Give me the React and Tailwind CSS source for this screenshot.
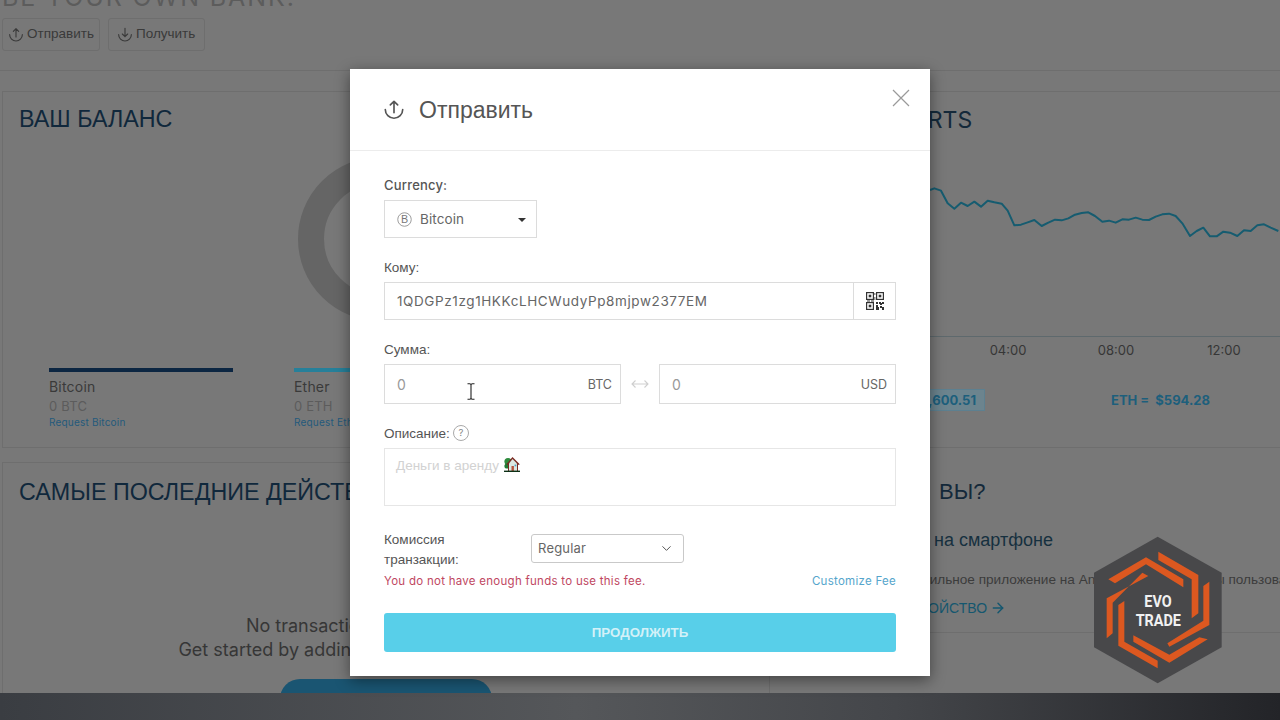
import React from "react";
import { ChevronDown, ArrowRight } from "lucide-react";

const chartPts = "15,300 28,295 48,302 68,340 88,356 108,338 128,348 148,335 168,350 188,332 208,337 230,341 248,362 268,406 288,404 308,397 328,390 350,408 370,398 390,389 410,391 430,385 450,374 470,369 490,367 510,378 532,395 552,392 572,398 592,388 612,389 632,383 652,389 672,390 692,380 712,373 732,371 752,378 772,400 795,438 815,423 835,413 855,439 875,439 895,425 915,428 937,438 957,421 977,423 997,406 1017,403 1037,413 1060,423";

function UploadIcon({ className, color = "#555", down = false, sw = 1.7 }) {
  return (
    <svg viewBox="0 0 24 24" fill="none" stroke={color} strokeWidth={sw} strokeLinecap="round" strokeLinejoin="round" className={className}>
      <path d="M2.5 11.5a9.5 9.5 0 0 0 19 0" />
      {down ? <path d="M12 2v12.5M8 10.5l4 4 4-4" /> : <path d="M12 15V2.5M8 6.5l4-4 4 4" />}
    </svg>
  );
}

function QrIcon() {
  const fp = (x, y) => (
    <g key={x + "-" + y}>
      <rect x={x + 0.6} y={y + 0.6} width="6.8" height="6.8" fill="none" stroke="#333" strokeWidth="1.2" />
      <rect x={x + 2.7} y={y + 2.7} width="2.6" height="2.6" fill="#333" />
    </g>
  );
  return (
    <svg viewBox="0 0 18 18" className="w-[18px] h-[18px]">
      {fp(0, 0)}
      {fp(10, 0)}
      {fp(0, 10)}
      <path d="M10 10h2v2h-2zM13 10h2v1h1v2h-2v-1h-1zM16 10h2v2h-2zM10 13h2v2h1v3h-3zM14 14h2v1h2v3h-2v-2h-2zM8.5 1h.8v2h-.8zM8.5 5h.8v3h-.8zM1 8.6h3v.8H1zM5 8.6h3v.8H5z" fill="#333" />
    </svg>
  );
}

function HouseEmoji() {
  return (
    <svg viewBox="0 0 16 16" className="w-4 h-4 inline-block -mt-[1px]">
      <circle cx="4" cy="5.5" r="3.6" fill="#2e8b3d" />
      <circle cx="3" cy="10" r="2.6" fill="#1f7a33" />
      <path d="M8.5 1 15.5 8v.8H14V15H4V8.8H2.5V8z" fill="#7a2a22" />
      <path d="M8.5 3 13 7.5V15H5V7.5z" fill="#dce9e2" />
      <rect x="7.5" y="10" width="2.4" height="5" fill="#b5533c" />
      <rect x="10.6" y="8.6" width="1.7" height="1.7" fill="#4aa0c8" />
      <path d="M0 14.6h16V16H0z" fill="#0c2f15" />
    </svg>
  );
}

function Logo() {
  return (
    <svg viewBox="0 0 600 480" className="absolute left-[1080px] top-[530px] w-[200px] h-[160px]">
      <polygon points="233,20 425,128 425,352 233,460 42,352 42,128" fill="#48484a" />
      <g fill="#dc5820">
        <polygon points="85,148 198,82 310,148 310,172 198,103 105,160" />
        <polygon points="235,65 355,135 355,250 335,265 335,148 235,90" />
        <polygon points="388,155 388,285 268,350 262,340 370,272 370,168" />
        <polygon points="383,328 268,398 160,335 160,316 268,374 358,322" />
        <polygon points="233,415 115,347 115,225 133,213 133,335 233,392" />
        <polygon points="205,138 80,205 80,325 98,310 98,218 187,128" />
      </g>
      <text x="234" y="230" textAnchor="middle" textLength="82" lengthAdjust="spacingAndGlyphs" fill="#f1f1f1" fontSize="50" fontWeight="700" fontFamily="Roboto, sans-serif">EVO</text>
      <text x="235" y="288" textAnchor="middle" textLength="136" lengthAdjust="spacingAndGlyphs" fill="#f1f1f1" fontSize="50" fontWeight="700" fontFamily="Roboto, sans-serif">TRADE</text>
    </svg>
  );
}

function Background() {
  const arial = "font-['Liberation_Sans',sans-serif]";
  const inter = "font-['Inter',sans-serif]";
  return (
    <div className="flex flex-col h-full">
      <header className="h-[71px] shrink-0 border-b border-[#6e6e6e] px-[2px]">
        <div className={`${inter} h-[18px] -mt-[15px] text-[25px] leading-[24px] tracking-[1.9px] text-[#5c5c5c] whitespace-nowrap`}>BE YOUR OWN BANK.</div>
        <div className={`flex gap-2 mt-[15px] ${arial} text-[13.5px] text-[#3a3a3a]`}>
          <div className="w-[98px] h-[33px] border border-[#6e6e6e] rounded-[3px] flex items-center pl-[5px] gap-[3px]">
            <UploadIcon className="w-4 h-4" color="#3a3a3a" />Отправить
          </div>
          <div className="w-[97px] h-[33px] border border-[#6e6e6e] rounded-[3px] flex items-center pl-2 gap-[3px]">
            <UploadIcon className="w-4 h-4" color="#3a3a3a" down />Получить
          </div>
        </div>
      </header>

      <main className="flex-1 min-h-0 overflow-hidden pt-5 flex flex-col gap-[14px]">
        <div className="flex h-[357px] shrink-0 pl-[2px]">
          <section className="w-[648px] border border-[#6e6e6e] shrink-0">
            <h2 className={`${arial} pl-4 pt-[13px] h-[41px] text-[23.3px] leading-[28px] text-[#10283c]`}>ВАШ БАЛАНС</h2>
            <svg viewBox="0 0 164 164" className="ml-[295px] mt-6 w-[164px] h-[164px] block">
              <circle cx="82" cy="82" r="69" fill="none" stroke="#656565" strokeWidth="26" />
            </svg>
            <div className={`${inter} flex gap-[61px] ml-[46px] mt-[47px] tracking-[0.2px]`}>
              <div className="w-[184px]">
                <div className="h-1 bg-[#0c2642]" />
                <div className="text-[14px] leading-[20px] mt-[5px] text-[#3a3a3a]">Bitcoin</div>
                <div className="text-[13px] leading-[18px] text-[#5c5c5c]">0 BTC</div>
                <div className="text-[10px] leading-[14px] text-[#245a7c]">Request Bitcoin</div>
              </div>
              <div className="w-[184px]">
                <div className="h-1 bg-[#26809a]" />
                <div className="text-[14px] leading-[20px] mt-[5px] text-[#3a3a3a]">Ether</div>
                <div className="text-[13px] leading-[18px] text-[#5c5c5c]">0 ETH</div>
                <div className="text-[10px] leading-[14px] text-[#245a7c]">Request Ether</div>
              </div>
            </div>
          </section>
          <section className="flex-1 border-y border-[#6e6e6e] min-w-0">
            <h2 className={`${inter} pt-[14px] h-[58px] ml-[228px] text-[23px] leading-[28px] text-[#14293a] whitespace-nowrap`}>CHARTS</h2>
            <svg viewBox="0 180 1065 561" className="ml-[275px] w-[355px] h-[187px] block">
              <polyline points={chartPts} fill="none" stroke="#165c70" strokeWidth="6" strokeLinejoin="round" />
              <line x1="0" x2="1065" y1="740" y2="740" stroke="#5a666b" strokeWidth="3" />
            </svg>
            <div className={`${inter} flex ml-[304px] h-[28px] items-center text-[13px] text-[#363636]`}>
              <div className="w-[108px] text-center">04:00</div>
              <div className="w-[108px] text-center">08:00</div>
              <div className="w-[108px] text-center">12:00</div>
            </div>
            <div className={`${inter} flex items-center ml-[150px] mt-[24px] h-[22px] text-[13px] font-bold text-[#1d5f7c] whitespace-nowrap`}>
              <div className="w-[185px] h-[22px] border border-[#5d8090] bg-[#6c848e] flex items-center justify-end pr-2 pt-[1px]">BTC = $6,600.51</div>
              <div className="ml-[126px] pt-[1px]">ETH =&nbsp; $594.28</div>
            </div>
          </section>
        </div>

        <div className="flex flex-1 min-h-0 pl-[2px]">
          <section className="w-[768px] border border-[#6e6e6e] border-b-0 shrink-0 overflow-hidden flex flex-col items-center">
            <h2 className={`${arial} self-start pl-4 pt-[15px] text-[23.3px] leading-[28px] text-[#10283c] whitespace-nowrap`}>САМЫЕ ПОСЛЕДНИЕ ДЕЙСТВИЯ</h2>
            <div className={`${inter} mt-[108px] text-center text-[18px] leading-[24px] text-[#363636] whitespace-nowrap`}>
              <div>No transactions to show here yet</div>
              <div>Get started by adding some crypto to your wallet</div>
            </div>
            <div className="mt-[17px] w-[212px] h-10 shrink-0 rounded-full bg-[#1a5572]" />
          </section>
          <section className={`flex-1 ${arial} overflow-hidden`}>
            <h2 className="pt-[16px] ml-[169px] text-[22px] leading-[28px] text-[#14293a] whitespace-nowrap">ВЫ?</h2>
            <div className="mt-[22px] ml-[164px] text-[18px] leading-[24px] text-[#16303f] whitespace-nowrap">на смартфоне</div>
            <div className="mt-[18px] ml-[135px] text-[13.6px] leading-[20px] text-[#3c3c3c] whitespace-nowrap">мобильное приложение на Android или iOS, чтобы пользоваться</div>
            <div className="mt-2 ml-[122px] text-[14px] leading-[20px] text-[#15576f] whitespace-nowrap flex items-center gap-[3px]">УСТРОЙСТВО <ArrowRight className="w-4 h-4" strokeWidth={2.2} /></div>
            <div className="mt-[14px] border-t border-[#6e6e6e]" />
          </section>
        </div>
      </main>

      <footer className="h-[27px] shrink-0 bg-[linear-gradient(90deg,#3a3d42_0%,#55575a_45%,#44464a_70%,#232428_100%)]" />
    </div>
  );
}

function Modal() {
  const label = "font-['Liberation_Sans',sans-serif] text-[13.5px] leading-[20px] text-[#555] h-5 pt-[1px]";
  const mont = "font-['Inter',sans-serif]";
  return (
    <div className="absolute left-[350px] top-[69px] w-[580px] h-[607px] bg-white shadow-[0_4px_14px_rgba(0,0,0,0.45)]">
      <div className="h-[82px] border-b border-[#ececec] flex items-center pl-[33px] gap-[14px] relative">
        <UploadIcon className="w-[22px] h-[22px]" color="#555" sw={1.8} />
        <span className="font-['Liberation_Sans',sans-serif] text-[23px] text-[#555] pt-[1px]">Отправить</span>
        <svg viewBox="0 0 18 18" className="absolute right-[20px] top-[20px] w-[18px] h-[18px]" stroke="#9a9a9a" strokeWidth="1.2">
          <path d="M1 1l16 16M17 1L1 17" />
        </svg>
      </div>

      <div className="px-[34px] pt-6">
        <div className={`${mont} text-[13px] font-medium leading-[20px] tracking-[0.2px] text-[#555]`}>Currency:</div>
        <div className={`${mont} mt-[5px] w-[153px] h-[38px] border border-[#dcdcdc] flex items-center pl-3 text-[13.5px] text-[#666] relative`}>
          <svg viewBox="0 0 16 16" className="w-[15px] h-[15px]">
            <circle cx="8" cy="8" r="7.2" fill="none" stroke="#8a8a8a" strokeWidth="0.9" />
            <text x="8" y="12" textAnchor="middle" fontSize="11.5" fill="#777" fontFamily="Liberation Sans, sans-serif">B</text>
          </svg>
          <span className="ml-2 tracking-[0.1px]">Bitcoin</span>
          <span className="absolute right-[10px] top-[17px] w-0 h-0 border-x-[4.5px] border-x-transparent border-t-[4px] border-t-[#333]" />
        </div>

        <div className={`${label} mt-[19px]`}>Кому:</div>
        <div className="mt-[5px] h-[38px] border border-[#dcdcdc] flex">
          <div className={`${mont} flex-1 flex items-center pl-3 text-[13.5px] tracking-[0.6px] text-[#666] whitespace-nowrap`}>1QDGPz1zg1HKKcLHCWudyPp8mjpw2377EM</div>
          <div className="w-[42px] border-l border-[#dcdcdc] flex items-center justify-center"><QrIcon /></div>
        </div>

        <div className={`${label} mt-[19px]`}>Сумма:</div>
        <div className="mt-[5px] flex items-center">
          <div className={`${mont} relative w-[237px] h-10 border border-[#dcdcdc] flex items-center justify-between pl-3 pr-2 text-[#666]`}>
            <span className="text-[14px] text-[#999]">0</span>
            <span className="text-[12.5px] pt-[3px]">BTC</span>
            <svg viewBox="0 0 10 17" className="absolute left-[81px] top-[18px] w-[10px] h-[17px]" fill="none" stroke="#222" strokeWidth="1.1">
              <path d="M1.5 .8h2.2c.8 0 1.3.5 1.3 1.2v13c0 .7.5 1.2 1.3 1.2h2.2M8.5 .8H6.3C5.5 .8 5 1.3 5 2v13c0 .7-.5 1.2-1.3 1.2H1.5" />
            </svg>
          </div>
          <svg viewBox="0 0 18 10" className="mx-[10px] w-[18px] h-[10px] shrink-0" fill="none" stroke="#cfcfcf" strokeWidth="1.1">
            <path d="M1 5h16M4.5 1.5 1 5l3.5 3.5M13.5 1.5 17 5l-3.5 3.5" />
          </svg>
          <div className={`${mont} w-[237px] h-10 border border-[#dcdcdc] flex items-center justify-between pl-3 pr-2 text-[#666]`}>
            <span className="text-[14px] text-[#999]">0</span>
            <span className="text-[12.5px] pt-[3px]">USD</span>
          </div>
        </div>

        <div className={`${label} mt-[19px] flex items-center gap-[3px]`}>
          Описание:
          <span className={`${mont} w-4 h-4 -mt-[1px] rounded-full border border-[#aaa] text-[9.5px] leading-none text-[#888] flex items-center justify-center`}>?</span>
        </div>
        <div className="mt-[5px] h-[58px] border border-[#e6e6e6] pl-[11px] pt-2 font-['Liberation_Sans',sans-serif] text-[13.5px] leading-[18px] text-[#d2d2d2] flex items-start gap-[5px]">
          Деньги в аренду <HouseEmoji />
        </div>

        <div className="mt-[23px] h-10 flex items-center">
          <div className="font-['Liberation_Sans',sans-serif] text-[13.5px] leading-[20px] text-[#555] pt-[1px] w-[147px]">Комиссия<br />транзакции:</div>
          <div className={`${mont} w-[153px] h-[29px] mb-[2px] border border-[#c9c9c9] rounded-[3px] flex items-center justify-between pl-[6px] pr-[9px] text-[13px] tracking-[0.2px] text-[#666]`}>
            <span className="pt-[1px]">Regular</span> <ChevronDown className="w-[15px] h-[15px] text-[#555]" strokeWidth={1.6} />
          </div>
        </div>

        <div className={`${mont} mt-[4px] h-[18px] flex items-center justify-between text-[11.5px] tracking-[0.27px]`}>
          <span className="text-[#c0475f]">You do not have enough funds to use this fee.</span>
          <span className="text-[#55a5cc]">Customize Fee</span>
        </div>

        <div className="mt-[22px] h-[39px] rounded-[3px] bg-[#58cfe9] flex items-center justify-center font-['Liberation_Sans',sans-serif] font-bold text-[13.3px] text-[#d3f1f8]">ПРОДОЛЖИТЬ</div>
      </div>
    </div>
  );
}

export default function App() {
  return (
    <div className="relative w-[1280px] h-[720px] overflow-hidden bg-[#787878]">
      <Background />
      <Modal />
      <Logo />
    </div>
  );
}
